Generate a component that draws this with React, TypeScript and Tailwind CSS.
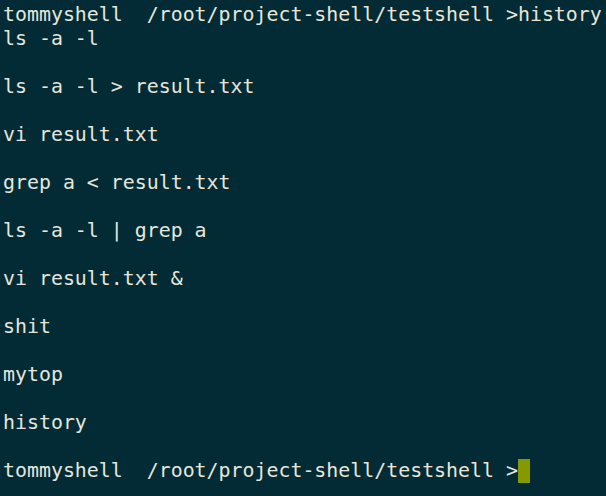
const lines = [
  "tommyshell  /root/project-shell/testshell >history",
  "ls -a -l",
  "",
  "ls -a -l > result.txt",
  "",
  "vi result.txt",
  "",
  "grep a < result.txt",
  "",
  "ls -a -l | grep a",
  "",
  "vi result.txt &",
  "",
  "shit",
  "",
  "mytop",
  "",
  "history",
  "",
];

export default function App() {
  return (
    <div className="w-[606px] h-[496px] overflow-hidden bg-[#022b36] text-[#e8e6d9] pl-[3px] pt-[3px] font-['DejaVu_Sans_Mono',monospace] text-[19.9px] leading-[24px] whitespace-pre">
      {lines.map((line, i) => (
        <div key={i} className="h-[24px]">
          {line}
        </div>
      ))}
      <div className="h-[24px] flex">
        <span>tommyshell  /root/project-shell/testshell &gt;</span>
        <span className="inline-block w-[12px] h-[24px] bg-[#869a00]" />
      </div>
    </div>
  );
}
